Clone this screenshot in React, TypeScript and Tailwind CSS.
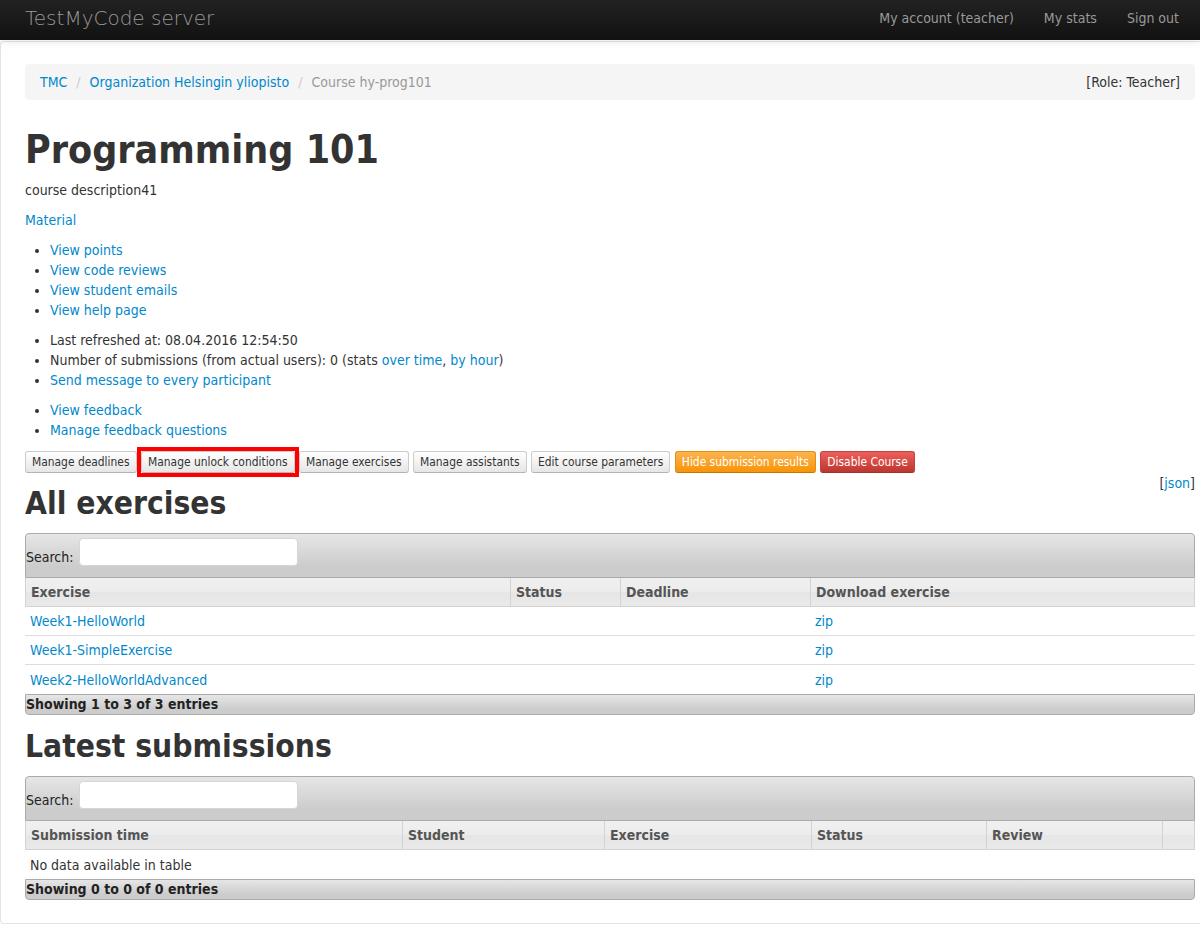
import React from "react";

const toolbarBg = "bg-[linear-gradient(#e6e6e6,#cccccc_75%)]";

function Btn({
  children,
  variant = "default",
  highlight = false,
}: {
  children: React.ReactNode;
  variant?: "default" | "warning" | "danger";
  highlight?: boolean;
}) {
  const base =
    "relative h-[22px] px-[6px] rounded-[3px] border text-[11.9px] leading-[20px] flex items-center whitespace-nowrap";
  const styles = {
    default:
      "bg-[linear-gradient(#ffffff,#e6e6e6)] border-[#cccccc] border-b-[#b3b3b3] text-[#333]",
    warning:
      "bg-[linear-gradient(#fbb450,#f89406)] border-[#e38d13] border-b-[#c67605] text-white",
    danger:
      "bg-[linear-gradient(#ee5f5b,#bd362f)] border-[#c2423c] border-b-[#a0302a] text-white",
  }[variant];
  return (
    <button className={`${base} ${styles}`}>
      {children}
      {highlight && (
        <span className="pointer-events-none absolute -left-[5px] -right-[5px] -top-[5px] -bottom-[5px] border-4 border-[#ff0000]" />
      )}
    </button>
  );
}

function Toolbar() {
  return (
    <div
      className={`h-[45px] border border-[#aaaaaa] rounded-t-[4px] ${toolbarBg} flex items-start pt-[4px]`}
    >
      <span className="mt-[9px] text-[#222]">Search:</span>
      <input
        className="ml-[5px] w-[219px] h-[28px] bg-white rounded-[4px] border border-[#d6d6d6] outline-none"
        aria-label="Search"
      />
    </div>
  );
}

function Footer({ text }: { text: string }) {
  return (
    <div
      className={`h-[21px] border border-[#aaaaaa] rounded-b-[4px] ${toolbarBg} font-bold text-[#222] leading-[19px]`}
    >
      {text}
    </div>
  );
}

function HeaderRow({ cols, widths }: { cols: string[]; widths: string }) {
  return (
    <div
      className={`grid ${widths} h-[29px] border-b border-[#d3d3d3] bg-[linear-gradient(#f0f0f0,#ececec_50%,#e6e6e6_52%,#e9e9e9)]`}
    >
      {cols.map((c, i) => (
        <div
          key={i}
          className={`border-l border-[#d3d3d3] ${
            i === cols.length - 1 ? "border-r" : ""
          } pl-[5px] flex items-center font-bold text-[#555]`}
        >
          {c}
        </div>
      ))}
    </div>
  );
}

const link = "text-[#0088cc]";

export default function App() {
  const exercises = [
    "Week1-HelloWorld",
    "Week1-SimpleExercise",
    "Week2-HelloWorldAdvanced",
  ];
  const ex1Cols = "grid-cols-[485px_110px_190px_385px]";
  const ex2Cols = "grid-cols-[377px_202px_207px_175px_176px_33px]";
  return (
    <div className="w-[1200px] min-h-[926px] overflow-hidden bg-white text-[14px] leading-[20px] text-[#333] font-['DejaVu_Sans_Condensed','DejaVu_Sans',sans-serif] [font-stretch:condensed]">
      <nav className="relative z-10 h-[40px] bg-[linear-gradient(#222222,#111111)] shadow-[0_1px_10px_rgba(0,0,0,0.1)] flex items-center justify-between pl-[25px] pr-[6px]">
        <span className="font-['DejaVu_Sans',sans-serif] [font-stretch:normal] font-extralight text-[20px] leading-[20px] text-[#999] pb-[4px]">
          TestMyCode server
        </span>
        <div className="flex pb-[4px]">
          {["My account (teacher)", "My stats", "Sign out"].map((t) => (
            <a key={t} className="px-[15px] text-[#999]">
              {t}
            </a>
          ))}
        </div>
      </nav>

      <div className="mt-[1px] w-[1200px] border-l border-t border-b border-[#e3e3e3] rounded-tl-[4px] rounded-bl-[4px] pl-[24px] pr-[5px] pt-[22px] pb-[23px]">
        <div className="w-[1170px]">
          <div className="h-[36px] bg-[#f5f5f5] rounded-[4px] px-[15px] py-[8px] flex justify-between">
            <div>
              <a className={link}>TMC</a>{" "}
              <span className="px-[5px] text-[#ccc]">/</span>{" "}
              <a className={link}>Organization Helsingin yliopisto</a>{" "}
              <span className="px-[5px] text-[#ccc]">/</span>{" "}
              <span className="text-[#999]">Course hy-prog101</span>
            </div>
            <div>[Role: Teacher]</div>
          </div>

          <h1 className="mt-[30px] mb-[10px] text-[39px] leading-[40px] font-bold">
            Programming 101
          </h1>
          <p className="mb-[10px]">course description41</p>
          <p className="mb-[10px]">
            <a className={link}>Material</a>
          </p>

          <ul className="list-disc ml-[25px] mb-[10px]">
            <li>
              <a className={link}>View points</a>
            </li>
            <li>
              <a className={link}>View code reviews</a>
            </li>
            <li>
              <a className={link}>View student emails</a>
            </li>
            <li>
              <a className={link}>View help page</a>
            </li>
          </ul>
          <ul className="list-disc ml-[25px] mb-[10px]">
            <li>Last refreshed at: 08.04.2016 12:54:50</li>
            <li>
              Number of submissions (from actual users): 0 (stats{" "}
              <a className={link}>over time</a>,{" "}
              <a className={link}>by hour</a>)
            </li>
            <li>
              <a className={link}>Send message to every participant</a>
            </li>
          </ul>
          <ul className="list-disc ml-[25px] mb-[10px]">
            <li>
              <a className={link}>View feedback</a>
            </li>
            <li>
              <a className={link}>Manage feedback questions</a>
            </li>
          </ul>

          <div className="flex gap-[4.5px] pt-[1px]">
            <Btn>Manage deadlines</Btn>
            <Btn highlight>Manage unlock conditions</Btn>
            <Btn>Manage exercises</Btn>
            <Btn>Manage assistants</Btn>
            <Btn>Edit course parameters</Btn>
            <Btn variant="warning">Hide submission results</Btn>
            <Btn variant="danger">Disable Course</Btn>
          </div>

          <div className="flex justify-between items-start">
            <h2 className="mt-[10px] mb-[10px] text-[31.5px] leading-[40px] font-bold">
              All exercises
            </h2>
            <div>
              [<a className={link}>json</a>]
            </div>
          </div>

          <div>
            <Toolbar />
            <HeaderRow
              widths={ex1Cols}
              cols={["Exercise", "Status", "Deadline", "Download exercise"]}
            />
            {exercises.map((e, i) => (
              <div
                key={e}
                className={`grid ${ex1Cols} h-[29px] ${
                  i < exercises.length - 1 ? "border-b border-[#dddddd]" : ""
                }`}
              >
                <div className="pl-[5px] flex items-center">
                  <a className={link}>{e}</a>
                </div>
                <div />
                <div />
                <div className="pl-[5px] flex items-center">
                  <a className={link}>zip</a>
                </div>
              </div>
            ))}
            <Footer text="Showing 1 to 3 of 3 entries" />
          </div>

          <h2 className="mt-[11px] mb-[10px] text-[31.5px] leading-[40px] font-bold">
            Latest submissions
          </h2>

          <div>
            <Toolbar />
            <HeaderRow
              widths={ex2Cols}
              cols={[
                "Submission time",
                "Student",
                "Exercise",
                "Status",
                "Review",
                "",
              ]}
            />
            <div className="h-[29px] pl-[5px] flex items-center">
              No data available in table
            </div>
            <Footer text="Showing 0 to 0 of 0 entries" />
          </div>
        </div>
      </div>
    </div>
  );
}
